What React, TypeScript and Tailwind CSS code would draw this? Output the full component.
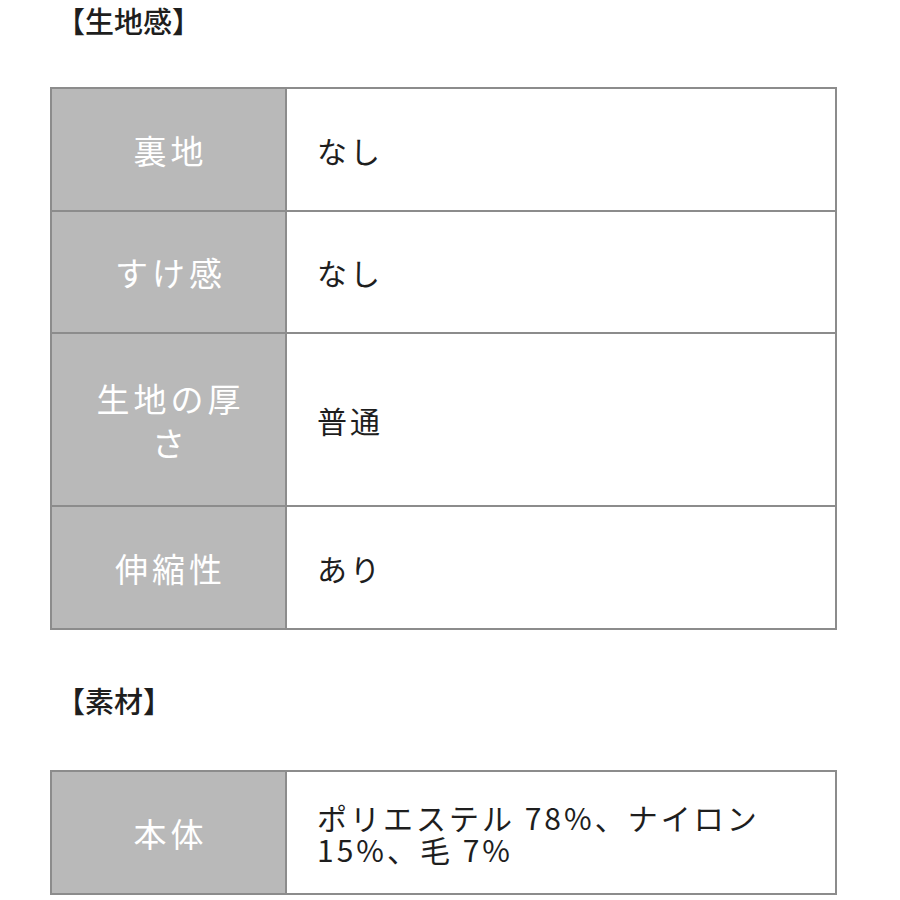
const font = "font-['Noto_Sans_CJK_JP','Noto_Sans',sans-serif]"

interface Row {
  label: string
  value: string
  height: string
}

const texture: Row[] = [
  { label: "裏地", value: "なし", height: "h-[121px]" },
  { label: "すけ感", value: "なし", height: "h-[122px]" },
  { label: "生地の厚さ", value: "普通", height: "h-[173px]" },
  { label: "伸縮性", value: "あり", height: "h-[123px]" },
]

const material: Row[] = [
  { label: "本体", value: "ポリエステル 78%、ナイロン 15%、毛 7%", height: "h-[121px]" },
]

function SpecTable({ rows }: { rows: Row[] }) {
  return (
    <div className="w-[787px] border-2 border-[#8c8c8c]">
      {rows.map((r, i) => (
        <div
          key={r.label}
          className={`flex ${r.height} ${i > 0 ? "border-t-2 border-[#8c8c8c]" : ""}`}
        >
          <div className="w-[235px] shrink-0 bg-[#b9b9b9] border-r-2 border-[#8c8c8c] flex items-center justify-center px-[24px]">
            <p className="text-[33px] leading-[44px] tracking-[4px] text-white text-center pl-[4px]">
              {r.label}
            </p>
          </div>
          <div className="flex-1 bg-white flex items-center pl-[30px] pr-[50px]">
            <p className="text-[30px] leading-[32px] tracking-[3px] text-[#1e1e1e]">{r.value}</p>
          </div>
        </div>
      ))}
    </div>
  )
}

export default function App() {
  return (
    <div className={`${font} w-[900px] h-[900px] bg-white overflow-hidden`}>
      <div className="pl-[56px] pt-[2px] h-[87px]">
        <h2 className="text-[29px] leading-[36px] font-medium text-[#1e1e1e]">【生地感】</h2>
      </div>
      <div className="pl-[50px]">
        <SpecTable rows={texture} />
      </div>
      <div className="pl-[56px] pt-[52px] h-[140px]">
        <h2 className="text-[29px] leading-[36px] font-medium text-[#1e1e1e]">【素材】</h2>
      </div>
      <div className="pl-[50px]">
        <SpecTable rows={material} />
      </div>
    </div>
  )
}
